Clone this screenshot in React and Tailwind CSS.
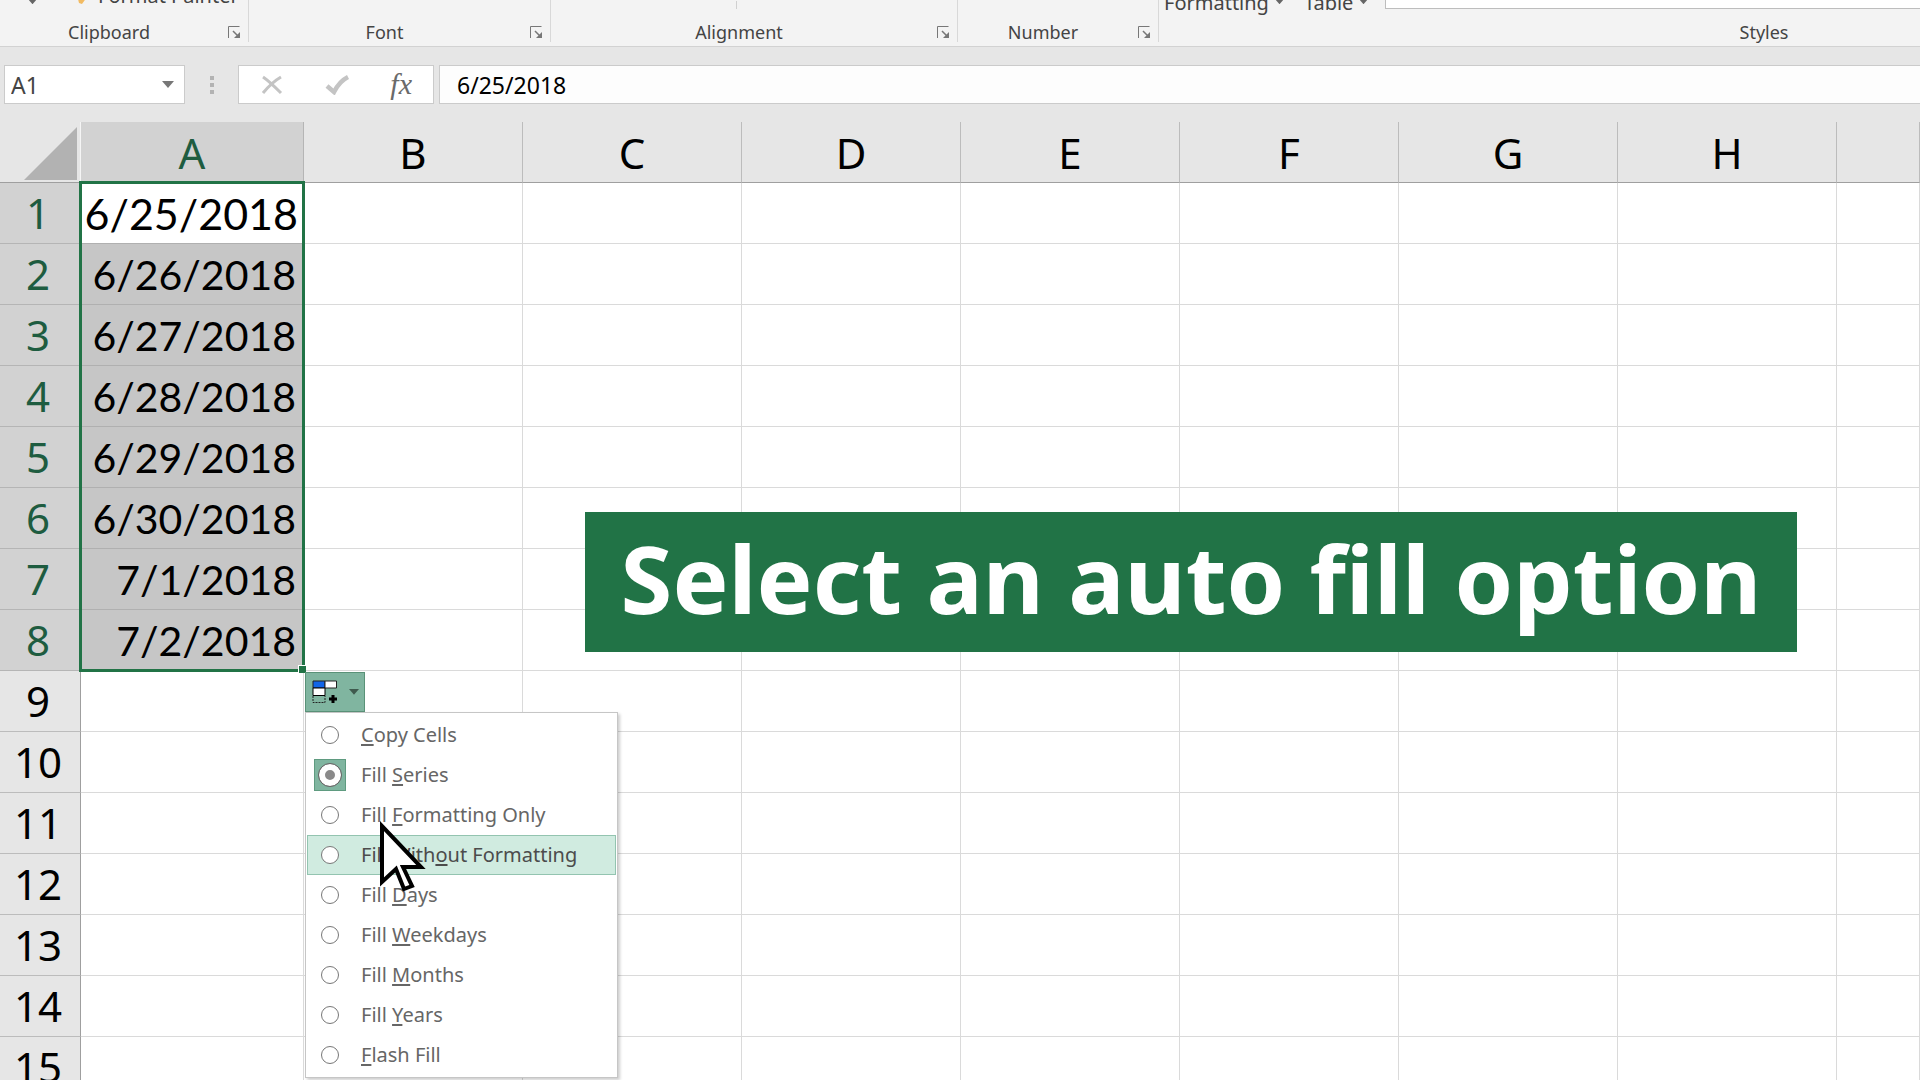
import { useState } from "react";

const COLUMNS = ["A", "B", "C", "D", "E", "F", "G", "H", ""];
const DATES = [
  "6/25/2018",
  "6/26/2018",
  "6/27/2018",
  "6/28/2018",
  "6/29/2018",
  "6/30/2018",
  "7/1/2018",
  "7/2/2018",
];
const ROWS = Array.from({ length: 15 }, (_, i) => i + 1);

// [before, access key, after]
const FILL_OPTIONS = [
  ["", "C", "opy Cells"],
  ["Fill ", "S", "eries"],
  ["Fill ", "F", "ormatting Only"],
  ["Fill With", "o", "ut Formatting"],
  ["Fill ", "D", "ays"],
  ["Fill ", "W", "eekdays"],
  ["Fill ", "M", "onths"],
  ["Fill ", "Y", "ears"],
  ["", "F", "lash Fill"],
];

function Caret({ className }) {
  return (
    <svg viewBox="0 0 12 7" className={className} aria-hidden="true">
      <path d="M0 0H12L6 7Z" fill="currentColor" />
    </svg>
  );
}

function RibbonGroup({ label, className, launcher = true, children }) {
  return (
    <section className={`flex h-[42px] shrink-0 flex-col ${className}`}>
      <div className="flex h-[17px] items-end overflow-hidden">{children}</div>
      <div className="flex h-[25px] items-center pt-[5px]">
        <span className="flex-1 pr-[10px] text-center text-lg leading-6">{label}</span>
        {launcher && (
          <button type="button" aria-label={`${label} settings`} className="mr-[7px] text-[#777]">
            <svg width="13" height="13" viewBox="0 0 13 13" fill="none" stroke="currentColor">
              <path d="M0.5 12V0.5H11.5" />
              <path d="M5 5L10 10" strokeWidth="1.5" />
              <path d="M12 6V12H6Z" fill="currentColor" stroke="none" />
            </svg>
          </button>
        )}
      </div>
    </section>
  );
}

function Ribbon() {
  return (
    <header className="flex h-[47px] overflow-hidden border-b border-[#d2d2d2] bg-[#f3f3f3] text-[#444]">
      <RibbonGroup label="Clipboard" className="w-[249px] border-r border-[#d8d8d8]">
        <div className="flex items-end pb-[7px] pl-7">
          <Caret className="mb-[6px] w-[9px] text-[#666]" />
          <svg width="14" height="14" viewBox="0 0 14 14" className="mb-[5px] ml-[37px]" aria-hidden="true">
            <path d="M2 0L13 6L8 13L5 12Z" fill="#f2bb62" />
          </svg>
          <span className="ml-[10px] text-xl leading-7 whitespace-nowrap">Format Painter</span>
        </div>
      </RibbonGroup>
      <RibbonGroup label="Font" className="w-[302px] border-r border-[#d8d8d8]" />
      <RibbonGroup label="Alignment" className="w-[407px] border-r border-[#d8d8d8]">
        <div className="mb-2 ml-[185px] h-2 w-px bg-[#d0d0d0]" />
      </RibbonGroup>
      <RibbonGroup label="Number" className="w-[201px] border-r border-[#d8d8d8]" />
      <RibbonGroup label="Styles" className="w-[1220px]" launcher={false}>
        <div className="flex flex-1 items-end pl-[5px]">
          <span className="text-xl leading-7">Formatting</span>
          <Caret className="mb-[13px] ml-[6px] w-[9px] text-[#666]" />
          <span className="ml-5 text-xl leading-7">Table</span>
          <Caret className="mb-[13px] ml-[6px] w-[9px] text-[#666]" />
          <div className="mb-2 ml-[17px] h-5 flex-1 border-b border-l border-[#bdbdbd] bg-white" />
        </div>
      </RibbonGroup>
    </header>
  );
}

function FormulaBar() {
  return (
    <div className="flex h-[75px] items-start bg-[#e6e6e6] pt-[18px] pl-1">
      <div className="flex h-[39px] w-[181px] items-center border border-[#cbcbcb] bg-white pr-[10px]">
        <input
          aria-label="Name box"
          defaultValue="A1"
          className="w-full min-w-0 flex-1 pl-[6px] text-[23px] leading-8 text-[#444] outline-none"
        />
        <button type="button" aria-label="Show names" className="text-[#777]">
          <Caret className="w-3" />
        </button>
      </div>
      <div className="mx-[24px] flex h-[39px] w-[5px] flex-col items-center justify-center gap-[3px]">
        <span className="size-1 bg-[#b3b3b3]" />
        <span className="size-1 bg-[#b3b3b3]" />
        <span className="size-1 bg-[#b3b3b3]" />
      </div>
      <div className="flex h-[39px] w-[196px] items-center justify-between border border-[#cbcbcb] bg-white pr-[21px] pl-[22px]">
        <button type="button" aria-label="Cancel" className="text-[#c4c4c4]">
          <svg width="22" height="20" viewBox="0 0 22 20" fill="none" stroke="currentColor">
            <path d="M2 2C8 6 14 12 20 18" strokeWidth="3" />
            <path d="M20 2C13 6 7 12 2 18" strokeWidth="3" />
          </svg>
        </button>
        <button type="button" aria-label="Enter" className="text-[#c4c4c4]">
          <svg width="24" height="20" viewBox="0 0 24 20" fill="none" stroke="currentColor">
            <path d="M2 11L9 17C12 11 17 5 23 2" strokeWidth="4.500" />
          </svg>
        </button>
        <button
          type="button"
          aria-label="Insert function"
          className="pb-[2px] font-['Liberation_Serif',serif] text-[30px] leading-8 text-[#6a6a6a] italic"
        >
          fx
        </button>
      </div>
      <input
        aria-label="Formula bar"
        defaultValue="6/25/2018"
        className="ml-[5px] h-[39px] min-w-0 flex-1 border border-r-0 border-[#cbcbcb] bg-[#fdfdfd] pl-[17px] text-[23px] leading-8 text-black outline-none"
      />
    </div>
  );
}

function FillMenu() {
  const [selected, setSelected] = useState(1);

  return (
    <div className="absolute top-[1px] left-[224px] z-20">
      <button
        type="button"
        aria-label="Auto fill options"
        className="flex h-10 w-[60px] items-center justify-between border border-[#5a9278] bg-[#80b5a0] pr-[5px] pl-[6px]"
      >
        <svg width="26" height="25" viewBox="0 0 26 25" aria-hidden="true">
          <path d="M1 1H13V8H1Z" fill="#1266e8" stroke="#222" />
          <path d="M13 1H24.500V8H13Z" fill="#fff" stroke="#222" />
          <path d="M1 8H13V15.500H1Z" fill="#fff" stroke="#000" />
          <path d="M1 16V22.500H13V16" fill="none" stroke="#222" strokeDasharray="2 1" />
          <path d="M21 15V23M17 19H25" stroke="#000" strokeWidth="3" />
        </svg>
        <Caret className="w-[10px] text-[#3f5a4e]" />
      </button>
      <div className="w-[313px] border border-[#c6c6c6] bg-white py-[2px] pr-px pl-px shadow-[2px_2px_3px_rgba(0,0,0,0.2)]">
        {FILL_OPTIONS.map(([before, key, after], i) => (
          <label
            key={i}
            className={
              i === 3
                ? "flex h-10 items-center border border-[#93c4b0] bg-[#d0ebe0] pl-[6px] text-xl text-[#4c4c4c]"
                : "flex h-10 items-center border border-transparent pl-[6px] text-xl text-[#666]"
            }
          >
            <span
              className={
                i === selected
                  ? "flex size-8 items-center justify-center border border-[#5f9b80] bg-[#80b5a0]"
                  : "flex size-8 items-center justify-center"
              }
            >
              <input
                type="radio"
                name="fill"
                checked={i === selected}
                onChange={() => setSelected(i)}
                className="size-[18px] appearance-none rounded-full border border-[#777] bg-white checked:size-6 checked:border-[#666] checked:bg-[#8a8a8a] checked:shadow-[inset_0_0_0_6px_white]"
              />
            </span>
            <span className="ml-[15px] whitespace-pre">
              {before}
              <span className="underline underline-offset-2">{key}</span>
              {after}
            </span>
          </label>
        ))}
      </div>
      <svg
        width="52"
        height="80"
        viewBox="0 0 52 80"
        className="pointer-events-none absolute top-[148px] left-[73px]"
        aria-hidden="true"
      >
        <path
          d="M4 6V62L18 49L26 69L34 66L25 47H43Z"
          fill="#fff"
          stroke="#000"
          strokeWidth="4"
        />
      </svg>
    </div>
  );
}

function Sheet() {
  return (
    <div className="relative">
      <table className="w-full table-fixed border-separate border-spacing-0 text-[42px] leading-none">
        <colgroup>
          <col className="w-[81px]" />
          <col className="w-[223px]" />
          {COLUMNS.slice(1, 8).map((c) => (
            <col key={c} className="w-[219px]" />
          ))}
          <col />
        </colgroup>
        <thead>
          <tr className="h-[61px] bg-[#e6e6e6]">
            <th className="border-r border-b border-r-[#f5f5f5] border-b-[#9f9f9f] p-0">
              <svg width="53" height="53" viewBox="0 0 53 53" className="mt-[2px] ml-[24px]" aria-hidden="true">
                <path d="M53 0V53H0Z" fill="#b2b2b2" />
              </svg>
            </th>
            {COLUMNS.map((c, i) => (
              <th
                key={i}
                scope="col"
                className={
                  i === 0
                    ? "border-r border-b border-r-[#b5b5b5] border-b-[#9f9f9f] bg-[#d2d2d2] p-0 pt-[2px] font-normal text-[#1e5c40]"
                    : "border-r border-b border-r-[#bcbcbc] border-b-[#9f9f9f] p-0 pt-[2px] font-normal text-black"
                }
              >
                {c}
              </th>
            ))}
          </tr>
        </thead>
        <tbody>
          {ROWS.map((row) => (
            <tr key={row} className="h-[61px]">
              <th
                scope="row"
                className={
                  row <= 8
                    ? "border-r border-b border-[#b5b5b5] bg-[#d2d2d2] p-0 pr-1 font-normal text-[#1e5c40]"
                    : "border-r border-b border-r-[#9f9f9f] border-b-[#bcbcbc] bg-[#e6e6e6] p-0 pr-1 font-normal text-black"
                }
              >
                {row}
              </th>
              {COLUMNS.map((c, i) => {
                if (i > 0) {
                  return <td key={i} className="border-r border-b border-[#dadada] p-0" />;
                }
                return (
                  <td
                    key={i}
                    className={
                      row === 1
                        ? "relative border-b border-[#b0b0b0] bg-white p-0 pr-[6px] text-right font-['Lato',sans-serif] text-[43px] text-black"
                        : row <= 8
                          ? "relative border-b border-[#b0b0b0] bg-[#c6c6c6] p-0 pr-2 text-right font-['Lato',sans-serif] text-[41px] text-black"
                          : "relative border-r border-b border-[#dadada] p-0"
                    }
                  >
                    {DATES[row - 1]}
                    {row === 1 && (
                      <div className="pointer-events-none absolute -top-[2px] -left-[2px] z-10 h-[491px] w-[226px] border-[3px] border-[#217346]">
                        <span className="absolute -right-[4px] -bottom-[4px] size-2 border-t border-l border-white bg-[#217346]" />
                      </div>
                    )}
                  </td>
                );
              })}
            </tr>
          ))}
        </tbody>
      </table>

      {/* auto fill options, hanging off the corner of the selection */}
      <div className="absolute top-[549px] left-[81px]">
        <FillMenu />
      </div>

      <div className="absolute top-[390px] left-[585px] flex h-[140px] w-[1212px] items-center justify-center bg-[#217346]">
        <h1 className="pb-2 text-[94px] leading-none font-bold whitespace-nowrap text-white">
          Select an auto fill option
        </h1>
      </div>
    </div>
  );
}

export default function App() {
  return (
    <main className="h-screen overflow-hidden bg-white font-['Noto_Sans',sans-serif]">
      <Ribbon />
      <FormulaBar />
      <Sheet />
    </main>
  );
}
